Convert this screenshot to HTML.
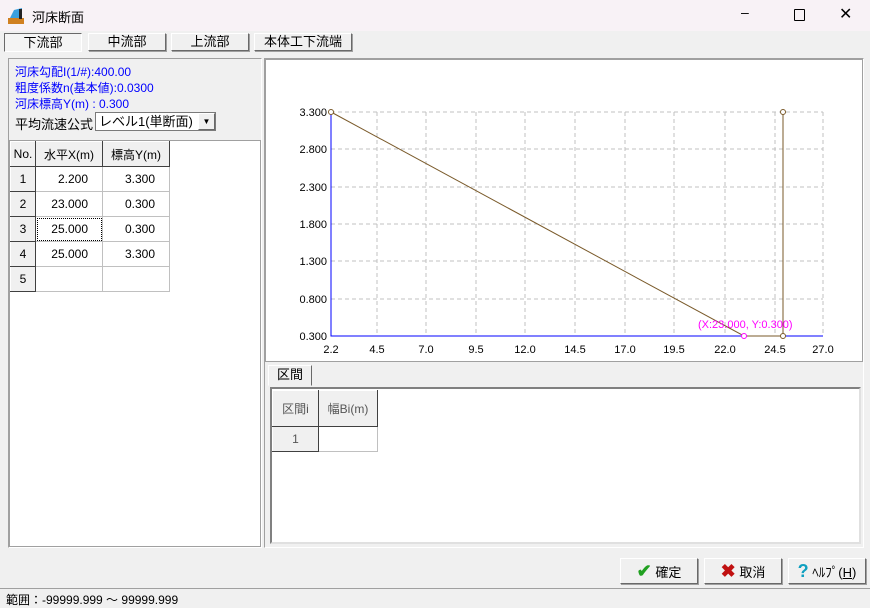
<!DOCTYPE html>
<html><head><meta charset="utf-8"><style>
*{box-sizing:border-box;margin:0;padding:0}
body{width:870px;height:607px;background:#f0f0f0;font-family:"Liberation Sans","Noto Sans CJK JP",sans-serif;font-size:12px;color:#000;position:relative;overflow:hidden}
.a{position:absolute}
.btn{position:absolute;background:#f0f0f0;border:1px solid;border-color:#fff #696969 #696969 #fff;box-shadow:1px 1px 0 #a0a0a0;text-align:center;font-size:13px}
.grid td{border:1px solid #c0c0c0;height:25px;text-align:right;padding-right:14px;font-size:12px}
.grid td.h{background:#f0f0f0;border-color:#fff #404040 #404040 #fff;text-align:center;padding:0}
.blue{color:#0000ff;font-size:12px;line-height:16px}
</style></head><body>
<div class="a" style="left:0;top:0;width:870px;height:31px;background:#f8f2f6"></div>
<svg class="a" style="left:8px;top:8px" width="18" height="16"><rect x="0" y="10" width="16" height="6" fill="#d08020"/><path d="M2 10 L6 2 L14 0 L14 10 Z" fill="#3aa0e0"/><rect x="11" y="1" width="3" height="10" fill="#222"/></svg>
<div class="a" style="left:32px;top:7px;font-size:13px">河床断面</div>
<div class="a" style="left:741px;top:4px;font-size:14px">–</div>
<div class="a" style="left:794px;top:9px;width:11px;height:12px;border:1.5px solid #000;border-radius:1px"></div>
<div class="a" style="left:839px;top:4px;font-size:16px">✕</div>

<div class="btn" style="left:4px;top:33px;width:78px;height:19px;border-color:#696969 #fff #fff #696969;box-shadow:none;background:#f4f4f4;line-height:17px">下流部</div>
<div class="btn" style="left:88px;top:33px;width:78px;height:18px;line-height:16px">中流部</div>
<div class="btn" style="left:171px;top:33px;width:78px;height:18px;line-height:16px">上流部</div>
<div class="btn" style="left:254px;top:33px;width:98px;height:18px;line-height:16px">本体工下流端</div>

<div class="a" style="left:8px;top:58px;width:254px;height:490px;border:1px solid;border-color:#a0a0a0 #fff #fff #a0a0a0"></div>
<div class="a blue" style="left:15px;top:64px">河床勾配I(1/#):400.00<br>粗度係数n(基本値):0.0300<br>河床標高Y(m) : 0.300</div>
<div class="a" style="left:15px;top:114px;font-size:13px">平均流速公式</div>
<div class="a" style="left:95px;top:112px;width:121px;height:19px;background:#fff;border:1px solid #7a7a7a;font-size:13px;padding-left:3px;line-height:17px">レベル1(単断面)</div>
<div class="btn" style="left:198px;top:113px;width:17px;height:17px;box-shadow:none;font-size:8px;line-height:15px">▼</div>
<div class="a" style="left:9px;top:140px;width:252px;height:407px;background:#fff;border:1px solid #a0a0a0"></div>
<table class="a grid" style="left:10px;top:141px;border-collapse:collapse">
<tr><td class="h" style="width:25px">No.</td><td class="h" style="width:67px">水平X(m)</td><td class="h" style="width:67px">標高Y(m)</td></tr>
<tr><td class="h">1</td><td>2.200</td><td>3.300</td></tr>
<tr><td class="h">2</td><td>23.000</td><td>0.300</td></tr>
<tr><td class="h">3</td><td style="outline:1px dotted #000;outline-offset:-2px">25.000</td><td>0.300</td></tr>
<tr><td class="h">4</td><td>25.000</td><td>3.300</td></tr>
<tr><td class="h">5</td><td></td><td></td></tr>
</table>

<div class="a" style="left:264px;top:58px;width:600px;height:490px;border:1px solid;border-color:#a0a0a0 #fff #fff #a0a0a0"></div>
<div class="a" style="left:265px;top:59px;width:598px;height:303px;background:#fff;border:1px solid #a0a0a0"></div>
<svg class="a" style="left:0;top:0" width="870" height="360" font-family="Liberation Sans, sans-serif" font-size="11">
<g stroke="#c0c0c0" stroke-dasharray="4,3" fill="none">
<path d="M331 112H823M331 149H823M331 187H823M331 224H823M331 261H823M331 299H823"/>
<path d="M377 112V336M426 112V336M476 112V336M525 112V336M575 112V336M625 112V336M674 112V336M725 112V336M775 112V336M823 112V336"/>
</g>
<path d="M331 112V336H823" stroke="#0000ff" fill="none"/>
<polyline points="331,112 744,336 783,336 783,112" stroke="#7a5a2a" fill="none"/>
<g fill="#fff" stroke="#7a5a2a"><circle cx="331" cy="112" r="2.5"/><circle cx="783" cy="336" r="2.5"/><circle cx="783" cy="112" r="2.5"/></g>
<circle cx="744" cy="336" r="2.5" fill="#fff" stroke="#ff00ff"/>
<text x="698" y="328" fill="#ff00ff">(X:23.000, Y:0.300)</text>
<g text-anchor="end"><text x="327" y="116">3.300</text><text x="327" y="153">2.800</text><text x="327" y="191">2.300</text><text x="327" y="228">1.800</text><text x="327" y="265">1.300</text><text x="327" y="303">0.800</text><text x="327" y="340">0.300</text></g>
<g text-anchor="middle"><text x="331" y="353">2.2</text><text x="377" y="353">4.5</text><text x="426" y="353">7.0</text><text x="476" y="353">9.5</text><text x="525" y="353">12.0</text><text x="575" y="353">14.5</text><text x="625" y="353">17.0</text><text x="674" y="353">19.5</text><text x="725" y="353">22.0</text><text x="775" y="353">24.5</text><text x="823" y="353">27.0</text></g>
</svg>
<div class="a" style="left:268px;top:365px;width:44px;height:21px;border:1px solid;border-color:#fff #696969 transparent #fff;text-align:center;font-size:13px;line-height:17px">区間</div>
<div class="a" style="left:270px;top:387px;width:591px;height:157px;background:#fff;border:2px solid;border-color:#808080 #e0e0e0 #e0e0e0 #808080"></div>
<table class="a grid" style="left:272px;top:390px;border-collapse:collapse">
<tr><td class="h" style="width:46px;height:36px;color:#555">区間i</td><td class="h" style="width:59px;color:#555">幅Bi(m)</td></tr>
<tr><td class="h" style="color:#555">1</td><td></td></tr>
</table>

<div class="btn" style="left:620px;top:558px;width:78px;height:26px;line-height:24px"><span style="color:#20a020;font-size:18px;font-weight:bold">✔</span> 確定</div>
<div class="btn" style="left:704px;top:558px;width:78px;height:26px;line-height:24px"><span style="color:#c01010;font-size:18px;font-weight:bold">✖</span> 取消</div>
<div class="btn" style="left:788px;top:558px;width:78px;height:26px;line-height:24px"><span style="color:#10a0c0;font-size:18px;font-weight:bold">?</span> ﾍﾙﾌﾟ(<u>H</u>)</div>
<div class="a" style="left:0;top:588px;width:870px;height:1px;background:#a0a0a0"></div>
<div class="a" style="left:6px;top:591px;font-size:12px">範囲：-99999.999 〜 99999.999</div>
</body></html>
